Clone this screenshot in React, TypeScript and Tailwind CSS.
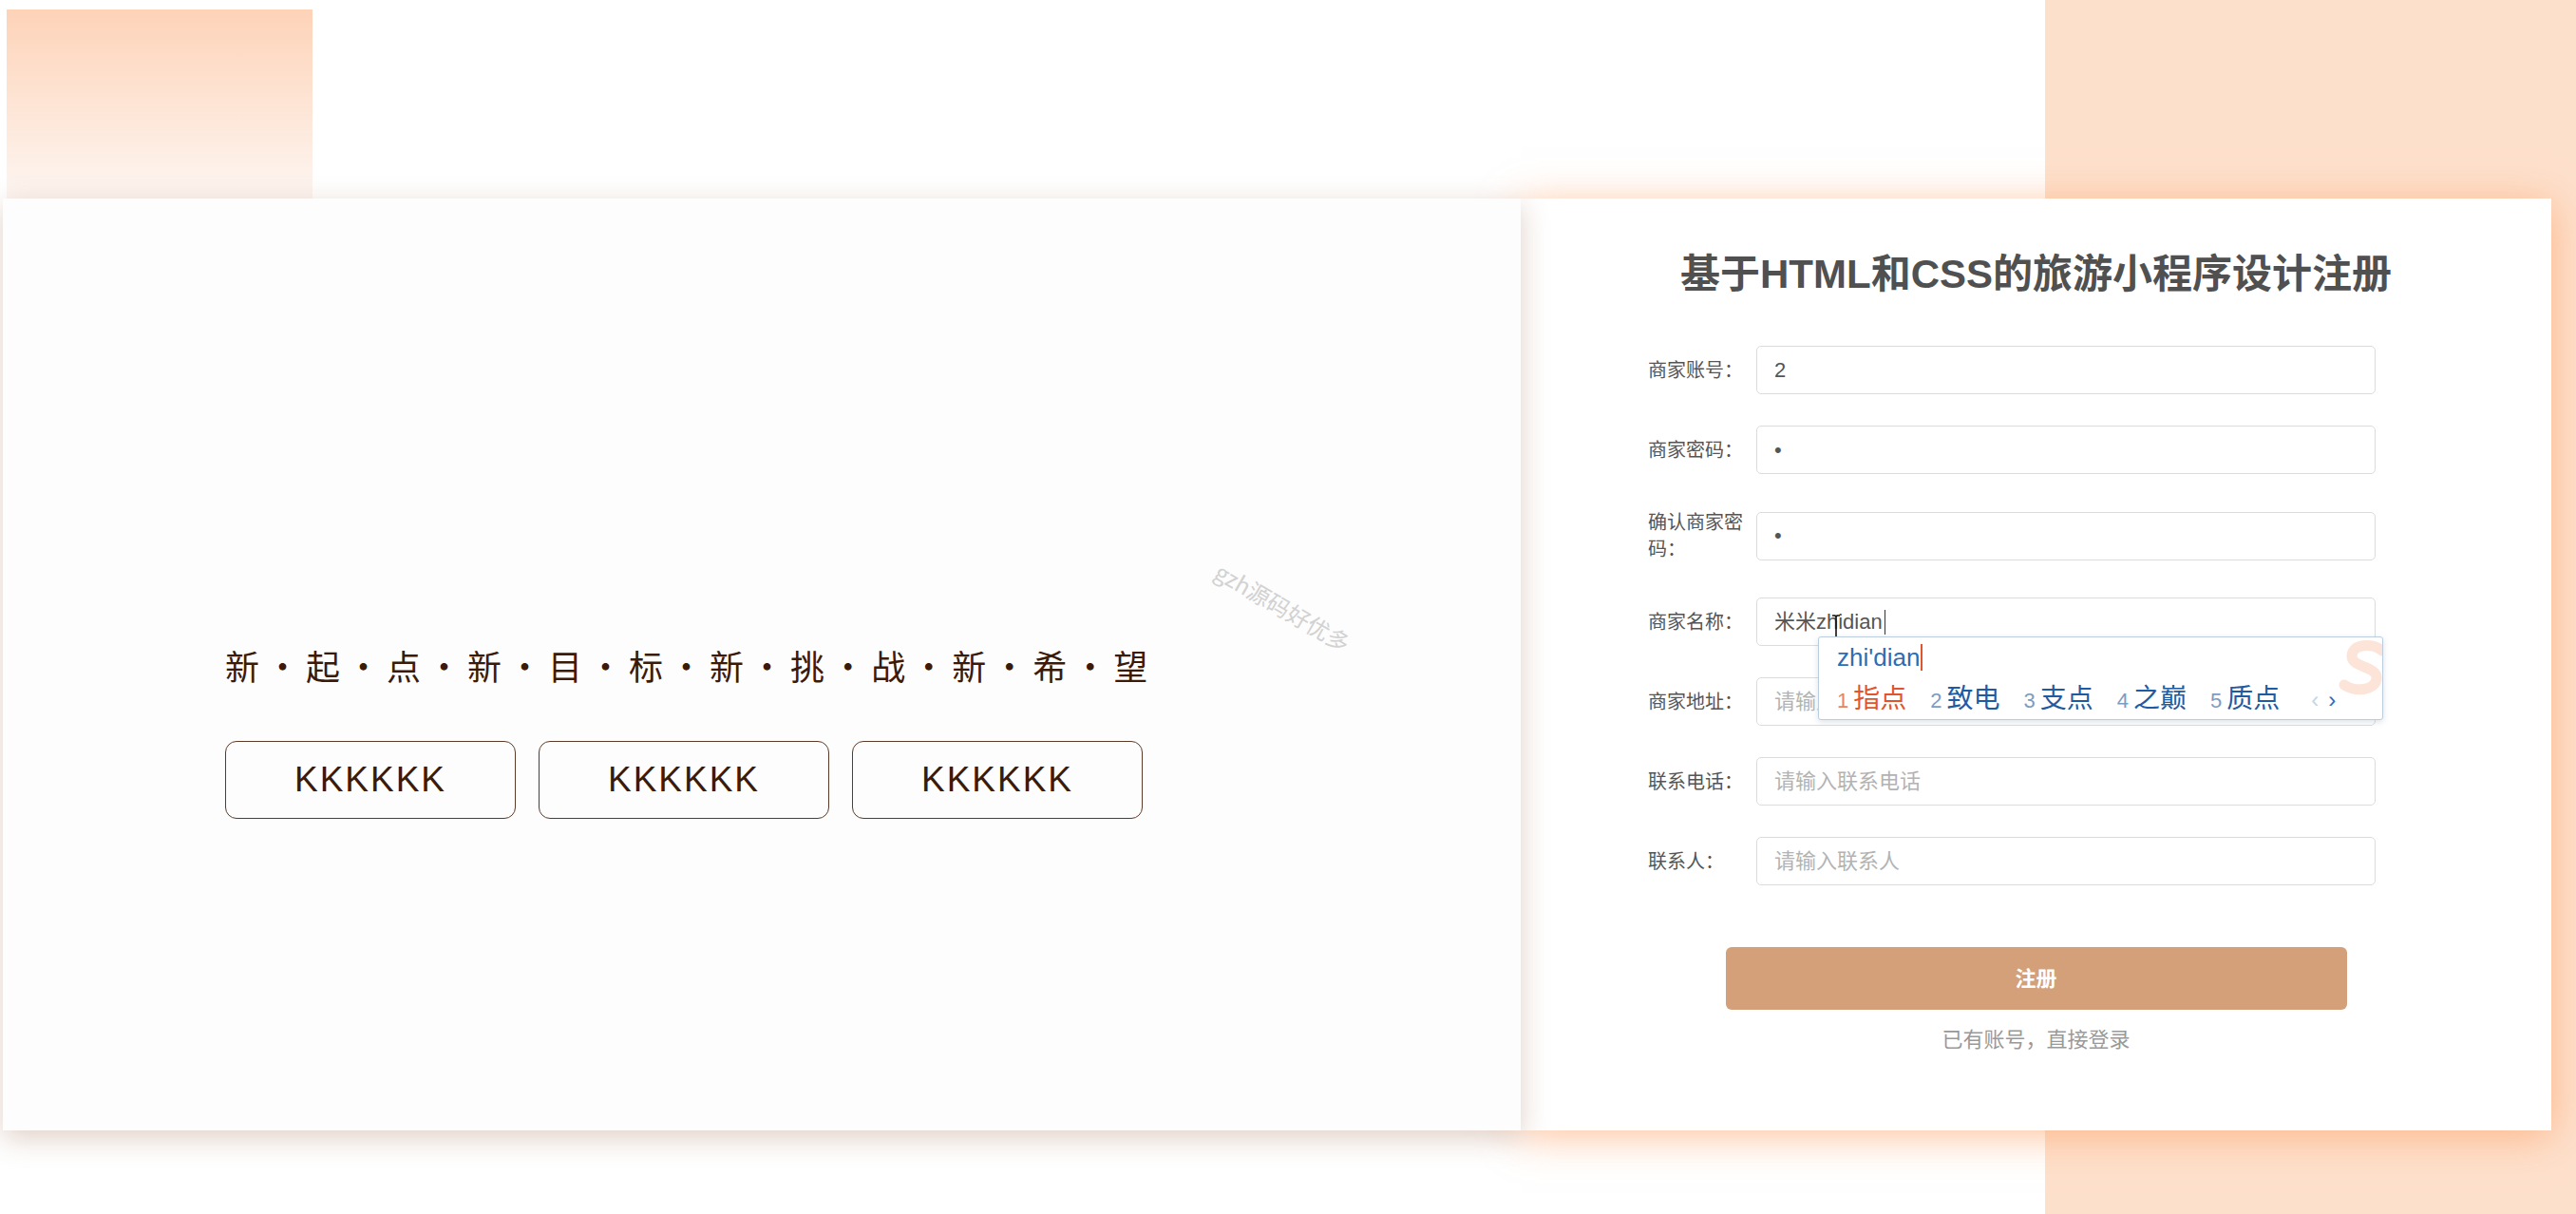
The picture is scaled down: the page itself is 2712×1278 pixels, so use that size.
import React from "react";

const slogan = "新起点新目标新挑战新希望".split("");

const fields = [
  { label: "商家账号：", value: "2" },
  { label: "商家密码：", value: "1", password: true },
  { label: "确认商家密码：", value: "1", password: true },
  { label: "商家名称：", ime: true },
  { label: "商家地址：", placeholder: "请输入商家地址" },
  { label: "联系电话：", placeholder: "请输入联系电话" },
  { label: "联系人：", placeholder: "请输入联系人" },
];

const candidates = ["指点", "致电", "支点", "之巅", "质点"];

function ImePopup() {
  return (
    <div className="absolute left-[64px] top-[40px] z-10 h-[88px] w-[595px] overflow-hidden rounded-[3px] border border-[#bccde0] bg-white pl-[19px] pt-[6px] shadow-[0_2px_6px_rgba(60,90,130,0.18)]">
      {/* faded sogou mark */}
      <svg className="absolute right-[-18px] top-[2px] h-[60px] w-[80px] opacity-25" viewBox="0 0 80 60" fill="none">
        <path d="M62 12 C52 4 30 4 30 18 C30 30 58 28 56 42 C54 54 34 56 22 48" stroke="#f2946a" strokeWidth="11" strokeLinecap="round" />
      </svg>
      <div className="relative flex h-[30px] items-center text-[26px] text-[#2d6db5]">
        <span>zhi'dian</span>
        <span className="ml-[1px] h-[28px] w-[2px] bg-[#e0562c]" />
      </div>
      <div className="relative mt-[8px] flex h-[36px] items-baseline gap-[25px]">
        {candidates.map((c, i) => (
          <div key={c} className="flex items-baseline">
            <span className={`text-[22px] ${i === 0 ? "text-[#e8845f]" : "text-[#7d9cc3]"}`}>{i + 1}</span>
            <span className={`ml-[5px] text-[28px] ${i === 0 ? "text-[#e0552b]" : "text-[#1e5ba3]"}`}>{c}</span>
          </div>
        ))}
        <div className="ml-[8px] flex items-baseline gap-[10px] text-[24px]">
          <span className="text-[#c8d4e2]">‹</span>
          <span className="text-[#2d6db5]">›</span>
        </div>
      </div>
    </div>
  );
}

export default function App() {
  return (
    <div className="relative h-[1278px] w-full overflow-hidden bg-white font-['Liberation_Sans','Noto_Sans_CJK_SC',sans-serif]">
      {/* background blocks */}
      <div className="absolute left-[7px] top-[10px] h-[199px] w-[322px] bg-linear-to-b from-[#fdd3b8] to-[#fdf6f2]" />
      <div className="absolute right-0 top-0 h-full w-[559px] bg-[#fde0cc]" />

      <div className="relative flex pl-[3px] pt-[209px]">
        {/* left side */}
        <div className="relative h-[981px] w-[1598px] bg-[#fdfdfd] shadow-[0_8px_28px_rgba(150,95,65,0.3)]">
          <div className="flex flex-col pl-[234px] pt-[467px]">
            <div className="flex h-[48px] items-center gap-[18px] font-['Noto_Sans_CJK_SC',sans-serif] text-[36px] text-[#3b1a08]">
              {slogan.map((ch, i) => (
                <React.Fragment key={i}>
                  {i > 0 && <span className="flex w-[13px] justify-center">·</span>}
                  <span>{ch}</span>
                </React.Fragment>
              ))}
            </div>
            <div className="mt-[56px] flex gap-[24px]">
              {[0, 1, 2].map((i) => (
                <div
                  key={i}
                  className="flex h-[82px] w-[306px] items-center justify-center rounded-[12px] border border-[#5b3a28] text-[37px] tracking-[2px] text-[#3b1a08]"
                >
                  KKKKKK
                </div>
              ))}
            </div>
          </div>
          <div className="absolute left-[1268px] top-[412px] rotate-[30deg] font-['Noto_Sans_CJK_SC',sans-serif] text-[24px] text-[#d2d2d2]">
            gzh源码好优多
          </div>
        </div>

        {/* register form */}
        <div className="h-[981px] w-[1085px] bg-white shadow-[0_6px_40px_rgba(253,160,100,0.65)]">
          <h1 className="pt-[50px] text-center text-[42px] font-bold leading-[60px] text-[#505050]">
            基于HTML和CSS的旅游小程序设计注册
          </h1>
          <div className="mt-[45px] flex flex-col gap-[33px] pl-[134px]">
            {fields.map((f) => (
              <div key={f.label} className="flex items-center">
                <label className="w-[114px] py-1 pr-[14px] text-[20px] leading-[28px] text-[#555]">{f.label}</label>
                {f.ime ? (
                  <div className="relative flex h-[51px] w-[652px] items-center rounded-[5px] border border-[#dcdcdc] px-[18px] text-[22px] text-[#555]">
                    <span>米米zhidian</span>
                    <span className="ml-[2px] h-[26px] w-[1px] bg-[#333]" />
                    <svg className="absolute left-[78px] top-[17px] h-[28px] w-[10px]" viewBox="0 0 10 28" fill="none">
                      <path d="M1 1h3l1 1.5L6 1h3M5 2.5v23M1 27h3l1-1.5L6 27h3" stroke="#111" strokeWidth="1.6" />
                    </svg>
                    <ImePopup />
                  </div>
                ) : (
                  <input
                    readOnly
                    type={f.password ? "password" : "text"}
                    defaultValue={f.value}
                    placeholder={f.placeholder}
                    className="h-[51px] w-[652px] rounded-[5px] border border-[#dcdcdc] px-[18px] text-[22px] text-[#555] outline-none placeholder:text-[#b3b3b3]"
                  />
                )}
              </div>
            ))}
          </div>
          <button className="mx-auto mt-[65px] flex h-[66px] w-[654px] items-center justify-center rounded-[6px] bg-[#d4a07a] text-[22px] font-bold text-white">
            注册
          </button>
          <p className="mt-[17px] text-center text-[22px] leading-[30px] text-[#999]">已有账号，直接登录</p>
        </div>
      </div>
    </div>
  );
}
